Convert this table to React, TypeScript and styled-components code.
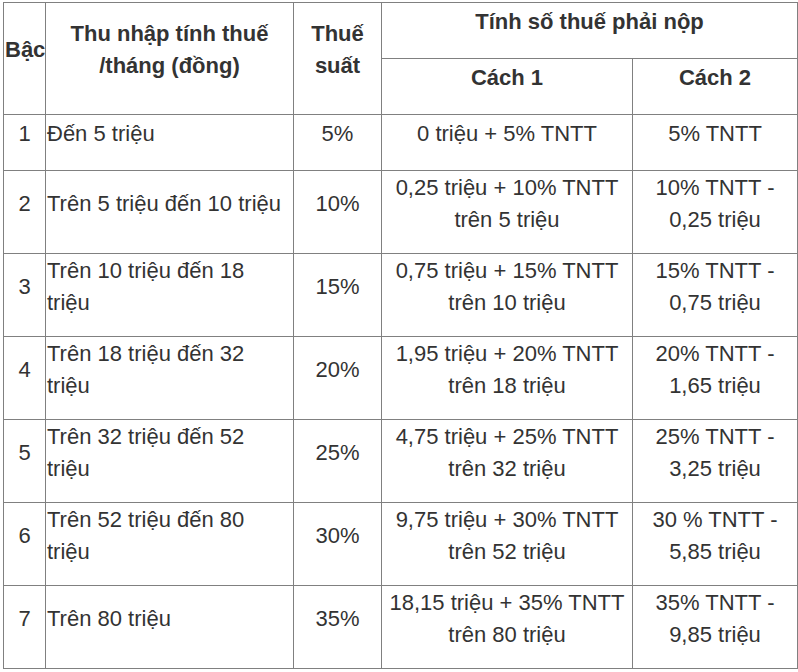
import React from 'react';
import styled, { createGlobalStyle } from 'styled-components';

const GlobalStyle = createGlobalStyle`
  html, body {
    margin: 0;
    padding: 0;
    background: #fff;
  }
`;

const Page = styled.div`
  padding: 2px 0 0 3px;
  font-family: 'Liberation Sans', Arial, Helvetica, sans-serif;
  color: #333;
`;

const Table = styled.table`
  border-collapse: collapse;
  table-layout: fixed;
  width: 794px;
  font-size: 22px;
  line-height: 32px;
`;

const Row = styled.tr<{ $h: number }>`
  height: ${(p) => p.$h}px;
`;

const Cell = styled.td<{ $align?: 'left' | 'center' }>`
  border: 1px solid #808080;
  padding: 0 1px 17px;
  vertical-align: middle;
  text-align: ${(p) => p.$align || 'center'};
  white-space: nowrap;
  overflow: hidden;
`;

const HeadCell = styled(Cell).attrs({ as: 'th' })`
  font-weight: bold;
`;

type Tier = {
  level: string;
  income: string[];
  rate: string;
  way1: string[];
  way2: string[];
};

const tiers: Tier[] = [
  { level: '1', income: ['Đến 5 triệu'], rate: '5%', way1: ['0 triệu + 5% TNTT'], way2: ['5% TNTT'] },
  {
    level: '2',
    income: ['Trên 5 triệu đến 10 triệu'],
    rate: '10%',
    way1: ['0,25 triệu + 10% TNTT', 'trên 5 triệu'],
    way2: ['10% TNTT -', '0,25 triệu'],
  },
  {
    level: '3',
    income: ['Trên 10 triệu đến 18', 'triệu'],
    rate: '15%',
    way1: ['0,75 triệu + 15% TNTT', 'trên 10 triệu'],
    way2: ['15% TNTT -', '0,75 triệu'],
  },
  {
    level: '4',
    income: ['Trên 18 triệu đến 32', 'triệu'],
    rate: '20%',
    way1: ['1,95 triệu + 20% TNTT', 'trên 18 triệu'],
    way2: ['20% TNTT -', '1,65 triệu'],
  },
  {
    level: '5',
    income: ['Trên 32 triệu đến 52', 'triệu'],
    rate: '25%',
    way1: ['4,75 triệu + 25% TNTT', 'trên 32 triệu'],
    way2: ['25% TNTT -', '3,25 triệu'],
  },
  {
    level: '6',
    income: ['Trên 52 triệu đến 80', 'triệu'],
    rate: '30%',
    way1: ['9,75 triệu + 30% TNTT', 'trên 52 triệu'],
    way2: ['30 % TNTT -', '5,85 triệu'],
  },
  {
    level: '7',
    income: ['Trên 80 triệu'],
    rate: '35%',
    way1: ['18,15 triệu + 35% TNTT', 'trên 80 triệu'],
    way2: ['35% TNTT -', '9,85 triệu'],
  },
];

function Lines({ lines }: { lines: string[] }) {
  return (
    <>
      {lines.map((l, i) => (
        <React.Fragment key={i}>
          {i > 0 && <br />}
          {l}
        </React.Fragment>
      ))}
    </>
  );
}

export default function App() {
  return (
    <>
      <GlobalStyle />
      <Page>
        <Table>
          <colgroup>
            <col style={{ width: 42 }} />
            <col style={{ width: 248 }} />
            <col style={{ width: 88 }} />
            <col style={{ width: 251 }} />
            <col style={{ width: 165 }} />
          </colgroup>
          <thead>
            <Row $h={56}>
              <HeadCell rowSpan={2}>Bậc</HeadCell>
              <HeadCell rowSpan={2}>
                <Lines lines={['Thu nhập tính thuế', '/tháng (đồng)']} />
              </HeadCell>
              <HeadCell rowSpan={2}>
                <Lines lines={['Thuế', 'suất']} />
              </HeadCell>
              <HeadCell colSpan={2}>Tính số thuế phải nộp</HeadCell>
            </Row>
            <Row $h={56}>
              <HeadCell>Cách 1</HeadCell>
              <HeadCell>Cách 2</HeadCell>
            </Row>
          </thead>
          <tbody>
            {tiers.map((t) => (
              <Row key={t.level} $h={t.level === '1' ? 56 : 83}>
                <Cell>{t.level}</Cell>
                <Cell $align="left">
                  <Lines lines={t.income} />
                </Cell>
                <Cell>{t.rate}</Cell>
                <Cell>
                  <Lines lines={t.way1} />
                </Cell>
                <Cell>
                  <Lines lines={t.way2} />
                </Cell>
              </Row>
            ))}
          </tbody>
        </Table>
      </Page>
    </>
  );
}
